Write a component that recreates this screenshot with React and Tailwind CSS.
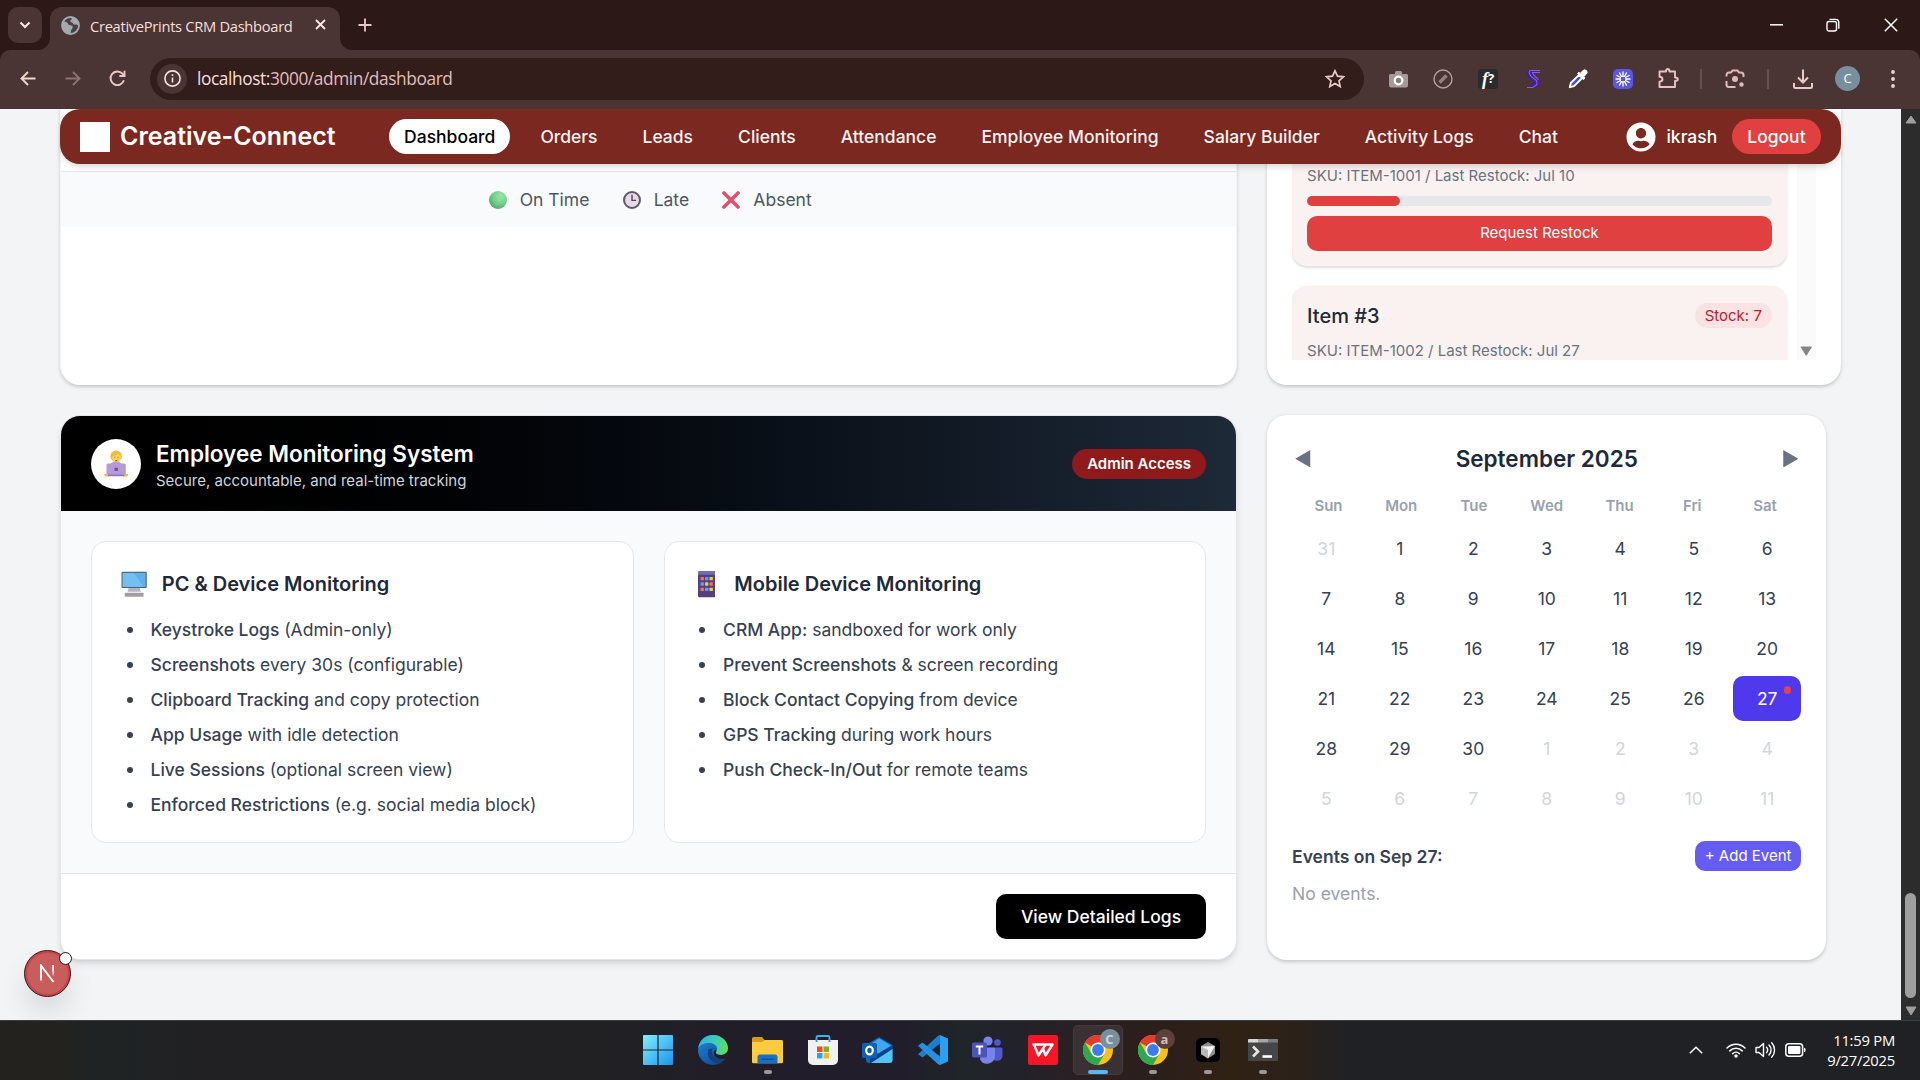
import React from "react";
import { FaUserCircle } from "react-icons/fa";

const INTER = "font-['Inter',sans-serif]";

/* ---------- browser chrome ---------- */

function ToolIcon({ children, className = "" }) {
  return <div className={"flex w-[45px] shrink-0 items-center justify-center " + className}>{children}</div>;
}

function TabStrip() {
  return (
    <div className="flex h-[50px] items-start bg-[#2c1917]">
      <div className="ml-2 mt-[7px] flex h-9 w-[34px] items-center justify-center rounded-[10px] bg-[#4a3534]">
        <svg width="12" height="8" viewBox="0 0 12 8" fill="none" stroke="#fbe9e7" strokeWidth="2"><path d="M1.5 1.5 6 6l4.500-4.500" /></svg>
      </div>
      <div className="relative ml-2 mt-[7px] flex h-[43px] w-[290px] items-start rounded-t-[12px] bg-[#4a3534]">
        <svg className="absolute -left-3 bottom-0" width="12" height="12" viewBox="0 0 12 12"><path d="M12 0v12H0A12 12 0 0 0 12 0Z" fill="#4a3534" /></svg>
        <svg className="absolute -right-3 bottom-0" width="12" height="12" viewBox="0 0 12 12"><path d="M0 0v12h12A12 12 0 0 1 0 0Z" fill="#4a3534" /></svg>
        <svg className="ml-[10.500px] mt-[8.500px] shrink-0" width="19" height="19" viewBox="0 0 19 19">
          <circle cx="9.500" cy="9.500" r="9.200" fill="#4a3f40" />
          <path d="M2 6C4 4.500 6.500 6 6.800 7.500c.3 1.600 2.700 1.500 4.200 2.300 1.600.9.600 2.700-.4 3.700-.9.900-.5 3-1.600 4.500C4 17.500 1 13.500 1 9.500 1 8 1.300 7 2 6Z" fill="#a3abb0" />
          <path d="M10.500 1C15 1.500 18 5 18 9.500c-1.500-.3-2.500-1.200-3.700-.9-1.300.2-2.300-.4-2.300-1.400s-1.800-.6-2.500-1.500c-.7-1 .2-2.200 1.200-2.200Z" fill="#a3abb0" />
          <circle cx="9.500" cy="9.500" r="8.500" fill="none" stroke="#a3abb0" strokeWidth="1.800" />
        </svg>
        <span className="ml-[10.500px] mt-[7.500px] w-[213px] whitespace-nowrap font-['Open_Sans',sans-serif] text-[14.700px] leading-[22px] tracking-[-0.300px] text-[#f7dfdc]">CreativePrints CRM Dashboard</span>
        <svg className="ml-[11.500px] mt-[12px] shrink-0" width="11" height="11" viewBox="0 0 11 11" stroke="#f9e9e7" strokeWidth="1.800"><path d="m1 1 9 9M10 1l-9 9" /></svg>
      </div>
      <svg className="ml-[18px] mt-[18px]" width="14" height="14" viewBox="0 0 14 14" stroke="#e9c9c5" strokeWidth="1.800"><path d="M7 .5v13M.5 7h13" /></svg>
      <div className="flex-1" />
      <svg className="mr-[43px] mt-[24px]" width="13" height="2" viewBox="0 0 13 2"><path d="M0 .8h13" stroke="#fff" strokeWidth="1.500" /></svg>
      <svg className="mr-[44px] mt-[18px]" width="14" height="14" viewBox="0 0 14 14" fill="none" stroke="#fff" strokeWidth="1.400"><rect x="1" y="3.500" width="9.500" height="9.500" rx="2" /><path d="M3.500 1.400h6a3.300 3.300 0 0 1 3.300 3.300v6" /></svg>
      <svg className="mr-[22px] mt-[18px]" width="14" height="14" viewBox="0 0 14 14" stroke="#fff" strokeWidth="1.500"><path d="m.8.8 12.400 12.400M13.200.8.8 13.200" /></svg>
    </div>
  );
}

function Burst() {
  const rays = Array.from({ length: 12 }, (_, i) => i * 30);
  return (
    <svg width="20" height="20" viewBox="0 0 20 20">
      <rect width="20" height="20" rx="5" fill="#5a57e6" />
      {rays.map((r) => (
        <path key={r} d="M10 3v4" stroke="#fff" strokeWidth="1.300" strokeLinecap="round" transform={`rotate(${r} 10 10)`} />
      ))}
      <circle cx="10" cy="10" r="3" fill="none" stroke="#fff" strokeWidth="1" />
    </svg>
  );
}

function Toolbar() {
  return (
    <div className="bg-[#2c1917]">
      <div className="flex h-[59px] items-center rounded-t-[10px] bg-[#4a3534] pb-[2px] pl-[5px]">
        <ToolIcon>
          <svg width="16" height="15" viewBox="0 0 16 15" fill="none" stroke="#f2d3cf" strokeWidth="1.900"><path d="M15.500 7.500H1.500M8 1 1.500 7.500 8 14" /></svg>
        </ToolIcon>
        <ToolIcon>
          <svg width="16" height="15" viewBox="0 0 16 15" fill="none" stroke="#8c7371" strokeWidth="1.900"><path d="M.5 7.500h14M8 1l6.500 6.500L8 14" /></svg>
        </ToolIcon>
        <ToolIcon>
          <svg width="17" height="17" viewBox="0 0 17 17" fill="none" stroke="#ecc9c5" strokeWidth="1.900"><path d="M14.900 10.300A6.800 6.800 0 1 1 13.400 3.700L15.500 6" /><path d="M15.500.8V6h-5.200" /></svg>
        </ToolIcon>
        <div className="ml-[10px] flex h-[42px] w-[1214px] items-center rounded-full bg-[#321d1b]">
          <div className="ml-[7px] flex size-[30px] items-center justify-center rounded-full bg-[#4a3534]">
            <svg width="17" height="17" viewBox="0 0 17 17" fill="none" stroke="#f7dfdc" strokeWidth="1.600"><circle cx="8.500" cy="8.500" r="7.600" /><path d="M8.500 7.500v5M8.500 4.300v1.700" /></svg>
          </div>
          <span className="ml-[10px] flex-1 whitespace-nowrap font-['Open_Sans',sans-serif] text-[17.300px] leading-6 tracking-[-0.400px] text-[#e0bfbb]"><span className="text-[#f7dfdc]">localhost:</span>3000/admin/dashboard</span>
          <svg className="mr-[19px]" width="20" height="19" viewBox="0 0 20 19" fill="none" stroke="#e9c9c5" strokeWidth="1.700" strokeLinejoin="miter"><path d="m10 1.800 2.500 5.400 5.900.6-4.400 4 1.200 5.800L10 14.600l-5.200 3L6 11.800l-4.400-4 5.900-.6z" /></svg>
        </div>
        <div className="ml-[11.500px] flex">
          <ToolIcon>
            <svg width="19" height="18" viewBox="0 0 19 18"><path d="M6 2.500A1.500 1.500 0 0 1 7.500 1h4A1.500 1.500 0 0 1 13 2.500V4h4.500A1.500 1.500 0 0 1 19 5.500v10a2 2 0 0 1-2 2H2a2 2 0 0 1-2-2v-10A1.500 1.500 0 0 1 1.500 4H6Z" fill="#a39a99" /><circle cx="9.500" cy="10.500" r="3.800" fill="#8a7f7e" stroke="#fff" strokeWidth="2.200" /></svg>
          </ToolIcon>
          <ToolIcon>
            <svg width="20" height="20" viewBox="0 0 20 20" fill="none" stroke="#b3a09f"><circle cx="10" cy="10" r="9" strokeWidth="1.400" /><path d="m6.500 13.500 7-7" strokeWidth="3.400" stroke="#94807f" /></svg>
          </ToolIcon>
          <ToolIcon>
            <div className="flex h-5 w-5 items-center justify-center rounded-[3px] bg-[#2a2c2c] text-white">
              <span className="font-['Liberation_Serif',serif] text-[18px] font-bold italic leading-none">f</span>
              <span className="font-['Open_Sans',sans-serif] text-[13px] font-bold leading-none">?</span>
            </div>
          </ToolIcon>
          <ToolIcon>
            <svg width="16" height="20" viewBox="0 0 16 20" fill="none">
              <path d="M15 1H3L1 3.500 3 9l5 3 .500 2L1 19h9.500l4.500-3-1-6-5-4-.5-2H15Z" fill="#3f2390" />
              <path d="M15 1.500H5L4 3.500l2 4 5.500 4 .5 4-4 3H2M15 3.500H7.500L9 6.500l4.500 4" stroke="#8a5cf0" strokeWidth="1.100" />
            </svg>
          </ToolIcon>
          <ToolIcon>
            <svg width="20" height="20" viewBox="0 0 20 20"><path d="M1.800 18.200 2.800 14 11 5.800l3.200 3.200L6 17.200Z" fill="#3c55c8" stroke="#fff" strokeWidth="1.900" strokeLinejoin="round" /><path d="m9.500 4.500 1.500-1.300 1.200 1.200L15 1.600a2.300 2.300 0 0 1 3.400 3.400L15.700 7.700l1.200 1.300-1.300 1.500Z" fill="#fff" stroke="#fff" strokeLinejoin="round" /></svg>
          </ToolIcon>
          <ToolIcon><Burst /></ToolIcon>
          <ToolIcon>
            <svg width="21" height="21" viewBox="0 0 21 21" fill="none" stroke="#e9c4c0" strokeWidth="1.900" strokeLinejoin="round"><path d="M1.500 3.500H8C8 2 8.500 1 9.700 1s1.800 1 1.800 2.500H17v6c1.800 0 2.800.6 2.800 1.800S18.800 13 17 13v6H1.500v-5.200c2.200-.2 3-1.200 3-2.500s-.8-2.400-3-2.600Z" /></svg>
          </ToolIcon>
        </div>
        <div className="ml-[9px] h-5 w-[2px] bg-[#675150]" />
        <ToolIcon className="ml-[10.500px]">
          <svg width="20" height="20" viewBox="0 0 20 20" fill="none" stroke="#e0bcb8" strokeWidth="2"><path d="M1.500 7.500V6a2.500 2.500 0 0 1 2.500-2.500h2l1.500-2h5l1.500 2h2A2.500 2.500 0 0 1 18.500 6v2M1.500 12v3.500A2.500 2.500 0 0 0 4 18h6.500" /><circle cx="10" cy="10" r="3" fill="#e0bcb8" stroke="none" /><circle cx="16.500" cy="15.500" r="2.200" fill="#e0bcb8" stroke="none" /></svg>
        </ToolIcon>
        <div className="ml-[10px] h-5 w-[2px] bg-[#675150]" />
        <ToolIcon className="ml-[11px]">
          <svg width="20" height="20" viewBox="0 0 20 20" fill="none" stroke="#ecc9c5" strokeWidth="2"><path d="M10 .5v13M5 8.500l5 5 5-5M1 14v3.500a1.500 1.500 0 0 0 1.500 1.500h15a1.500 1.500 0 0 0 1.500-1.500V14" /></svg>
        </ToolIcon>
        <ToolIcon>
          <div className="flex size-[25px] items-center justify-center rounded-full bg-[#78909c] font-['Open_Sans',sans-serif] text-[13px] text-white">C</div>
        </ToolIcon>
        <ToolIcon>
          <svg width="4" height="18" viewBox="0 0 4 18" fill="#f2d3cf"><circle cx="2" cy="2" r="1.900" /><circle cx="2" cy="9" r="1.900" /><circle cx="2" cy="16" r="1.900" /></svg>
        </ToolIcon>
      </div>
    </div>
  );
}

/* ---------- dashboard page ---------- */

const NAV = ["Dashboard", "Orders", "Leads", "Clients", "Attendance", "Employee Monitoring", "Salary Builder", "Activity Logs", "Chat"];

function NavBar() {
  return (
    <header className="relative z-10 mx-12 flex h-11 items-center justify-between rounded-2xl bg-[#7a2820] px-4 text-white shadow-md">
      <div className="flex items-center gap-2">
        <div className="size-6 bg-white" />
        <span className="text-xl font-semibold leading-7">Creative-Connect</span>
      </div>
      <nav className="flex gap-3 text-sm font-medium">
        {NAV.map((n, i) => (
          <span key={n} className={i === 0 ? "rounded-full bg-white px-3 py-1 text-black" : "px-3 py-1 text-[#fdf1f0]"}>{n}</span>
        ))}
      </nav>
      <div className="flex items-center gap-3 text-sm font-medium">
        <div className="flex items-center gap-2">
          <FaUserCircle className="size-6" />
          <span>ikrash</span>
        </div>
        <span className="rounded-full bg-[#e0403f] px-3 py-1">Logout</span>
      </div>
    </header>
  );
}

function Legend({ icon, label }) {
  return (
    <div className="flex items-center pl-[2.500px]">
      {icon}
      <span className="ml-[10.500px]">{label}</span>
    </div>
  );
}

function AttendanceCard() {
  return (
    <section className="col-span-2 flex flex-col overflow-hidden rounded-b-2xl border-x border-gray-100 bg-white shadow-[0_1px_3px_rgba(0,0,0,0.18)]">
      <div className="h-[50.700px] border-b border-gray-200" />
      <div className="flex h-11 items-center justify-center gap-6 bg-gray-50 text-sm text-gray-600">
        <Legend
          label="On Time"
          icon={
            <svg width="14.400" height="14.400" viewBox="0 0 14 14">
              <defs><radialGradient id="g" cx=".65" cy=".3" r=".8"><stop offset="0" stopColor="#9be8a6" /><stop offset=".55" stopColor="#6fcf87" /><stop offset="1" stopColor="#4aa06e" /></radialGradient></defs>
              <circle cx="7" cy="7" r="7" fill="url(#g)" />
            </svg>
          }
        />
        <Legend
          label="Late"
          icon={
            <svg width="14.400" height="14.400" viewBox="0 0 14 14">
              <circle cx="7" cy="7" r="6.200" fill="#e4dbe9" stroke="#5f5866" strokeWidth="1.600" />
              <path d="M7 3v4.300h3.200" fill="none" stroke="#4c4254" strokeWidth="1.100" />
              <path d="M7 3v4" stroke="#c05a70" strokeWidth=".7" />
            </svg>
          }
        />
        <Legend
          label="Absent"
          icon={
            <svg width="14.400" height="14.400" viewBox="0 0 14 14"><path d="m1.500 1.500 11 11M12.500 1.500l-11 11" stroke="#e0506f" strokeWidth="2.800" strokeLinecap="round" /></svg>
          }
        />
      </div>
    </section>
  );
}

function StockItem({ name, stock, sku }) {
  return (
    <div className="flex h-[124px] shrink-0 flex-col gap-2 rounded-xl bg-[#faf2f1] p-3 shadow-[0_1px_2px_rgba(0,0,0,0.13)]">
      <div className="flex h-6 items-center justify-between">
        {name && <span className="text-base font-medium text-gray-800">{name}</span>}
        {stock && <span className="rounded-full bg-[#fbe3e3] px-2 py-0.5 text-xs leading-4 text-[#c11a26]">{stock}</span>}
      </div>
      <span className="text-xs leading-4 text-gray-500">{sku}</span>
      <div className="h-2 rounded-full bg-gray-200"><div className="h-2 w-1/5 rounded-full bg-[#e0403f]" /></div>
      <div className="flex h-7 items-center justify-center rounded-lg bg-[#e0403f] text-xs text-white">Request Restock</div>
    </div>
  );
}

function StockCard() {
  return (
    <section className="flex overflow-hidden rounded-b-2xl bg-white px-5 pb-5 shadow-[0_1px_3px_rgba(0,0,0,0.18)]">
      <div className="flex h-[201px] w-full overflow-hidden">
        <div className="mt-[1.500px] flex flex-1 flex-col gap-4 pr-2">
          <StockItem sku="SKU: ITEM-1001 / Last Restock: Jul 10" />
          <StockItem name="Item #3" stock="Stock: 7" sku="SKU: ITEM-1002 / Last Restock: Jul 27" />
        </div>
        <div className="flex w-[15px] items-end justify-center bg-[#fafafa] pb-[3.500px]">
          <svg width="10" height="8" viewBox="0 0 10 8"><path d="M1 .8h8L5 7.200Z" fill="#858585" stroke="#858585" strokeLinejoin="round" /></svg>
        </div>
      </div>
    </section>
  );
}

function FeatureCard({ icon, title, items }) {
  return (
    <div className="flex-1 rounded-xl border border-gray-200 bg-white p-5">
      <div className="mb-3 flex h-7 items-center gap-[8.400px]">
        <div className="flex w-[27.400px] justify-center">{icon}</div>
        <h3 className="text-base font-semibold text-gray-800">{title}</h3>
      </div>
      <ul className="flex flex-col gap-2 text-sm text-gray-700">
        {items.map(([b, t]) => (
          <li key={b} className="flex items-center">
            <span className="ml-[7.900px] mr-[14.300px] mt-[1px] size-[4.600px] rounded-full bg-gray-700" />
            <span><span className="font-medium">{b}</span> {t}</span>
          </li>
        ))}
      </ul>
    </div>
  );
}

const PC_ITEMS = [
  ["Keystroke Logs", "(Admin-only)"],
  ["Screenshots", "every 30s (configurable)"],
  ["Clipboard Tracking", "and copy protection"],
  ["App Usage", "with idle detection"],
  ["Live Sessions", "(optional screen view)"],
  ["Enforced Restrictions", "(e.g. social media block)"],
];
const MOBILE_ITEMS = [
  ["CRM App:", "sandboxed for work only"],
  ["Prevent Screenshots", "& screen recording"],
  ["Block Contact Copying", "from device"],
  ["GPS Tracking", "during work hours"],
  ["Push Check-In/Out", "for remote teams"],
];

const APP_DOTS = ["#f0705a", "#5aa0f0", "#f5c84a", "#5aa0f0", "#f5c84a", "#f0705a", "#f0705a", "#5aa0f0", "#f5c84a"];

function MonitoringCard() {
  return (
    <section className="col-span-2 flex flex-col overflow-hidden rounded-2xl border border-gray-200 bg-white shadow-md">
      <div className="flex h-[77px] items-center bg-linear-to-r from-black to-gray-800 px-6">
        <div className="flex size-10 items-center justify-center rounded-full bg-white">
          <svg width="21" height="23" viewBox="0 0 21 23">
            <circle cx="10.500" cy="5.800" r="4.600" fill="#f2bb3a" />
            <path d="M7.500 5.500c2 0 4-.8 4.500-2 .5 1 1.200 1.600 2 2v2a3.200 3.200 0 0 1-6.500 0Z" fill="#ffd25e" />
            <path d="M9.300 6.600v.6M12 6.600v.6M9.800 9c.6.4 1.200.4 1.700 0" stroke="#7b5220" strokeWidth=".7" />
            <path d="M6 12.500c.5-2 2.500-2.500 4.500-2.500s4 .5 4.500 2.500Z" fill="#b79ad8" />
            <rect x="2.800" y="11.500" width="15.400" height="9.500" rx="1.200" fill="#b49ad6" />
            <rect x="9.200" y="15" width="2.700" height="2.500" fill="#66529a" />
            <path d="M1 20h3l1 2H1.500ZM20 20h-3l-1 2h3.500Z" fill="#f0b93d" />
            <rect x="4" y="20.300" width="13" height="1.500" rx=".5" fill="#8f79bd" />
          </svg>
        </div>
        <div className="ml-3 flex-1">
          <h2 className="text-lg font-semibold leading-7 text-white">Employee Monitoring System</h2>
          <p className="text-xs leading-4 text-gray-300">Secure, accountable, and real-time tracking</p>
        </div>
        <span className="rounded-full bg-[#901a1b] px-3 py-1 text-xs font-semibold leading-4 text-white">Admin Access</span>
      </div>
      <div className="flex gap-6 bg-gray-50 p-6">
        <FeatureCard
          title="PC & Device Monitoring"
          items={PC_ITEMS}
          icon={
            <svg width="21" height="21" viewBox="0 0 21 21">
              <rect x=".4" y=".6" width="20.200" height="13" rx=".8" fill="#46617f" />
              <rect x="1.300" y="1.500" width="18.400" height="11.200" fill="#5fb1ea" />
              <path d="M1.300 1.500h9L18 12.700H1.300Z" fill="#7fc4f2" opacity=".7" />
              <path d="M6 13.600h9l.8 3H5.200Z" fill="#b9b3bd" />
              <rect x="3" y="17.300" width="15" height="3.300" rx=".5" fill="#a69ca8" />
            </svg>
          }
        />
        <FeatureCard
          title="Mobile Device Monitoring"
          items={MOBILE_ITEMS}
          icon={
            <svg width="14" height="21" viewBox="0 0 14 21">
              <rect width="14" height="21" rx="1.300" fill="#54407c" />
              <path d="M0 3V1.300A1.300 1.300 0 0 1 1.300 0h11.400A1.300 1.300 0 0 1 14 1.300V3Z" fill="#6e6fb5" />
              {APP_DOTS.map((c, i) => (
                <rect key={i} x={2 + (i % 3) * 3.6} y={4.700 + Math.floor(i / 3) * 4.300} width="2.700" height="2.700" rx=".5" fill={c} />
              ))}
            </svg>
          }
        />
      </div>
      <div className="flex justify-end border-t border-gray-200 px-6 py-4">
        <span className="flex h-9 items-center rounded-lg bg-black px-5 text-sm font-medium text-white">View Detailed Logs</span>
      </div>
    </section>
  );
}

const WEEK = ["Sun", "Mon", "Tue", "Wed", "Thu", "Fri", "Sat"];
const DAYS = Array.from({ length: 42 }, (_, i) => {
  if (i === 0) return { n: 31, out: true };
  if (i <= 30) return { n: i, out: false };
  return { n: i - 30, out: true };
});

function dayClass(d) {
  if (d.out) return "relative flex h-9 items-center justify-center text-gray-300";
  if (d.n === 27) return "relative flex h-9 items-center justify-center rounded-lg bg-[#4f39ec] text-white";
  return "relative flex h-9 items-center justify-center text-gray-700";
}

function CalendarCard() {
  return (
    <section className="w-[447.500px] rounded-2xl bg-white p-5 pt-[20.600px] shadow-[0_1px_3px_rgba(0,0,0,0.18)]">
      <div className="flex h-7 items-center justify-between pl-[2.500px] pr-[2.500px]">
        <svg width="12.400" height="14" viewBox="0 0 12 14"><path d="M12 0v14L0 7Z" fill="#6a7282" /></svg>
        <h3 className="text-lg font-semibold text-gray-800">September 2025</h3>
        <svg width="12.400" height="14" viewBox="0 0 12 14"><path d="M0 0v14l12-7Z" fill="#6a7282" /></svg>
      </div>
      <div className="mt-4 grid grid-cols-7 text-center text-xs font-semibold leading-4 text-gray-400">
        {WEEK.map((w) => <span key={w}>{w}</span>)}
      </div>
      <div className="mt-2 grid grid-cols-7 gap-1 text-sm">
        {DAYS.map((d, i) => (
          <div key={i} className={dayClass(d)}>
            {d.n}
            {!d.out && d.n === 27 && <span className="absolute right-2 top-2 size-1.5 rounded-full bg-[#e6404a]" />}
          </div>
        ))}
      </div>
      <div className="mt-4 flex h-6 items-center justify-between">
        <span className="text-sm font-semibold text-gray-700">Events on Sep 27:</span>
        <span className="rounded-lg bg-[#655cf6] px-2 py-1 text-xs leading-4 text-white">+ Add Event</span>
      </div>
      <p className="mt-2 text-sm text-gray-400">No events.</p>
    </section>
  );
}

function DevBadge() {
  return (
    <div className="absolute left-6 top-[840.500px] flex size-[47px] items-center justify-center rounded-full border-[1.500px] border-[#3a1618] bg-[#c95d5b] shadow-[inset_0_0_0_2px_#c8424c,0_16px_32px_-8px_rgba(0,0,0,0.24)]">
      <svg width="17" height="19" viewBox="0 0 17 19" fill="none">
        <defs><linearGradient id="n" x1="0" y1="0" x2="0" y2="1"><stop offset=".4" stopColor="#fff" /><stop offset="1" stopColor="#fff" stopOpacity="0" /></linearGradient></defs>
        <path d="M2 16.500V1.500L14.500 18" stroke="#fff" strokeWidth="1.900" />
        <rect x="13.200" y="1" width="1.800" height="12" fill="url(#n)" />
      </svg>
      <span className="absolute right-[-1.500px] top-[1px] size-[13px] rounded-full border-[1.500px] border-[#1c1c1c] bg-white" />
    </div>
  );
}

function Page() {
  return (
    <div className="relative flex h-[911px] overflow-hidden bg-[#f3f4f6]">
      <div className="h-[911px] w-[1901px] overflow-hidden">
        <div className={"w-[1520.500px] [zoom:1.25] " + INTER}>
          <NavBar />
          <main className="-mt-11 flex flex-col gap-6 px-12">
            <div className="grid h-[221px] grid-cols-3 gap-6">
              <AttendanceCard />
              <StockCard />
            </div>
            <div className="grid h-[435.700px] grid-cols-3 gap-6">
              <MonitoringCard />
              <CalendarCard />
            </div>
          </main>
        </div>
      </div>
      <div className="flex flex-1 flex-col items-center bg-[#2c2c2c]">
        <svg className="mt-[6px] shrink-0" width="12" height="9" viewBox="0 0 12 9"><path d="M6 1 11 8H1Z" fill="#9f9f9f" stroke="#9f9f9f" strokeLinejoin="round" /></svg>
        <div className="mt-[769px] h-[105px] w-[11px] shrink-0 rounded-full bg-[#9f9f9f]" />
        <svg className="mt-[8px] shrink-0" width="12" height="10" viewBox="0 0 12 10"><path d="M6 9 11 1H1Z" fill="#9f9f9f" stroke="#9f9f9f" strokeLinejoin="round" /></svg>
      </div>
      <DevBadge />
    </div>
  );
}

/* ---------- taskbar ---------- */

function ChromeLogo({ letter, bg, fg }) {
  return (
    <div className="relative size-[30px]">
      <svg width="30" height="30" viewBox="0 0 30 30">
        <circle cx="15" cy="15" r="15" fill="#fbc116" />
        <path d="M15 15 2 7.500A15 15 0 0 1 28 7.500H15Z" fill="#e33b2e" />
        <path d="M2 7.500A15 15 0 0 0 15 30l6.500-11.250L8.500 18.750Z" fill="#2da94f" />
        <circle cx="15" cy="15" r="7.500" fill="#fff" />
        <circle cx="15" cy="15" r="5.900" fill="#3b7ded" />
      </svg>
      <span className="absolute -right-[7px] -top-[6px] flex size-5 items-center justify-center rounded-full font-['Open_Sans',sans-serif] text-[13px] font-bold leading-none" style={{ background: bg, color: fg }}>{letter}</span>
    </div>
  );
}

function TaskSlot({ children, mark, active }) {
  return (
    <div className="flex w-[55px] justify-center">
      <div className={active ? "relative flex h-[50px] w-[50px] items-center justify-center rounded-[5px] border border-[#473a3d] bg-[#3b3033]" : "relative flex h-[50px] w-[50px] items-center justify-center"}>
        {children}
        {mark && <span className={active ? "absolute bottom-0 h-[4px] w-5 rounded-full bg-[#55b8ee]" : "absolute bottom-[1px] h-[4px] w-[8px] rounded-full bg-[#9a9896]"} />}
      </div>
    </div>
  );
}

function Taskbar() {
  return (
    <footer className="flex h-[60px] border-t border-[#3b3d3e] bg-[linear-gradient(90deg,#24221e_0px,#24221e_50px,#1e2324_100px,#212124_190px,#212124_600px,#211d2a_760px,#211d2a_900px,#1f2529_960px,#22222a_1010px,#2c1f21_1100px,#2b1f1b_1160px,#302114_1230px,#2c2119_1290px,#202125_1350px,#202125_1920px)]">
      <div className="ml-[630px] flex items-center pb-px">
        <TaskSlot>
          <svg width="30" height="30" viewBox="0 0 30 30">
            <defs><linearGradient id="w" x1="0" y1="0" x2="1" y2="1"><stop offset="0" stopColor="#7df0fb" /><stop offset="1" stopColor="#1b93ef" /></linearGradient></defs>
            <path d="M1 0h13.400v14.400H0V1a1 1 0 0 1 1-1ZM15.600 0H29a1 1 0 0 1 1 1v13.400H15.600ZM0 15.600h14.400V30H1a1 1 0 0 1-1-1ZM15.600 15.600H30V29a1 1 0 0 1-1 1H15.600Z" fill="url(#w)" />
          </svg>
        </TaskSlot>
        <TaskSlot>
          <svg width="30" height="30" viewBox="0 0 30 30">
            <defs>
              <linearGradient id="e1" x1="0" y1=".3" x2="1" y2=".5"><stop offset="0" stopColor="#2fb3e8" /><stop offset=".6" stopColor="#3fcfae" /><stop offset="1" stopColor="#62dd58" /></linearGradient>
              <linearGradient id="e2" x1="0" y1="0" x2=".6" y2="1"><stop offset="0" stopColor="#1d8be0" /><stop offset="1" stopColor="#0d4f9e" /></linearGradient>
            </defs>
            <circle cx="15" cy="15" r="15" fill="url(#e2)" />
            <path d="M.2 13C1.300 5.300 7.500 0 15 0c8.800 0 15 6.500 15 13 0 4.500-3.500 7-7.200 7-3.300 0-5-1.200-5-2.300 0-.9 1.300-1.500 1.300-4 0-3.200-3.600-5.700-8-5.700C6 8 1.800 10 .2 13Z" fill="url(#e1)" />
            <path d="M10.800 14c-3 6 1 13.500 9 14.600 3.500-.9 6.600-3.400 8-6.200-3 1.800-8.800 2.200-12-1.200-2-2.100-2.300-5.200-1-7.700Z" fill="#1a3f78" />
            <path d="M17.800 17.700c.3 1.300 2 2.300 5 2.300 3 0 5.500-1.200 7.200-4v6l-2 1c-.5.600-2 1-4.600 1-3 .3-6.500-1.500-7.400-4.200-.8-2-.3-3.800 1.100-5.300 1.200.8 1.500 2.100.7 3.200Z" fill="#212124" />
          </svg>
        </TaskSlot>
        <TaskSlot mark>
          <svg width="31" height="28" viewBox="0 0 31 28">
            <path d="M1.500 1H10l3 3.500V9H0V2.500A1.500 1.500 0 0 1 1.500 1Z" fill="#d99a17" />
            <path d="M0 6h10l3-2h16.500A1.500 1.500 0 0 1 31 5.500v20.300A1.500 1.500 0 0 1 29.500 27.300h-28A1.500 1.500 0 0 1 0 25.800Z" fill="#fccb3e" />
            <path d="M5.500 27.500V21a2.500 2.500 0 0 1 2.500-2.500h15A2.500 2.500 0 0 1 25.500 21v6.500Z" fill="#1a6fc4" />
            <path d="M9.500 23.200h12" stroke="#0d4b93" strokeWidth="1.200" />
          </svg>
        </TaskSlot>
        <TaskSlot>
          <svg width="30" height="30" viewBox="0 0 30 30">
            <path d="M8.500 7V2.500A1.500 1.500 0 0 1 10 1h10a1.500 1.500 0 0 1 1.500 1.500V7" fill="none" stroke="#3fb4ea" strokeWidth="1.800" />
            <path d="M0 5h30v20a5 5 0 0 1-5 5H5a5 5 0 0 1-5-5Z" fill="#f1f1f1" />
            <path d="M8.500 7V4M21.500 7V4" stroke="#2a9ad8" strokeWidth="1.800" />
            <path d="M9 11.500h5.500V17H9Z" fill="#ef4a23" /><path d="M15.500 11.500H21V17h-5.500Z" fill="#7cb518" /><path d="M9 18h5.500v5.500H9Z" fill="#27a4ea" /><path d="M15.500 18H21v5.500h-5.500Z" fill="#fbb814" />
          </svg>
        </TaskSlot>
        <TaskSlot>
          <svg width="31" height="28" viewBox="0 0 31 28">
            <path d="M4 9 17 1l13.500 8v15a3 3 0 0 1-3 3H7a3 3 0 0 1-3-3Z" fill="#1267b8" />
            <path d="m8 8.500 9-6 12 7-13 8Z" fill="#3fa9ec" />
            <path d="M30.500 9.500v6L12 27H8v-4Z" fill="#0c3f8c" />
            <path d="M30.500 13v11a3 3 0 0 1-3 3H9Z" fill="#52c4f2" />
            <rect y="7" width="15" height="15" rx="1.500" fill="#0f5fb5" />
            <ellipse cx="7.500" cy="14.500" rx="3.300" ry="3.900" fill="none" stroke="#fff" strokeWidth="2.200" />
          </svg>
        </TaskSlot>
        <TaskSlot>
          <svg width="30" height="30" viewBox="0 0 30 30">
            <path d="M22 0v8.500L4.500 22.500 0 19.200 20 .8Z" fill="#1b7fd0" />
            <path d="M22 30v-8.500L4.500 7.500 0 10.800 20 29.200Z" fill="#2591e2" />
            <path d="M22 0 30 3.500v23L22 30Z" fill="#2b9ff0" />
          </svg>
        </TaskSlot>
        <TaskSlot>
          <svg width="31" height="28" viewBox="0 0 31 28">
            <circle cx="25.500" cy="6.500" r="3.300" fill="#5059c9" /><circle cx="16" cy="5" r="4.600" fill="#7b83eb" />
            <path d="M21 11.500h8a1.500 1.500 0 0 1 1.500 1.500v6.500a5.500 5.500 0 0 1-9.500 3.700Z" fill="#5059c9" />
            <path d="M10 11.500h11.500A1.500 1.500 0 0 1 23 13v7a8 8 0 0 1-15 3.500Z" fill="#7b83eb" />
            <rect x="0" y="6.500" width="15" height="15" rx="1.500" fill="#4b53bc" />
            <path d="M3.800 10.500h7.400M7.500 10.500v8" stroke="#fff" strokeWidth="2" />
          </svg>
        </TaskSlot>
        <TaskSlot>
          <svg width="30" height="30" viewBox="0 0 30 30">
            <rect width="30" height="30" rx="2.500" fill="#fb1425" />
            <path d="M4.500 9.500h6.500M6 9.500l4.500 11 4.500-7 2.500 7 7-11h-7l-3.200 5.500M11 9.500h5.500" fill="none" stroke="#fff" strokeWidth="2.400" strokeLinejoin="round" />
          </svg>
        </TaskSlot>
        <TaskSlot mark active><ChromeLogo letter="C" bg="#78909c" fg="#cfdbe1" /></TaskSlot>
        <TaskSlot mark><ChromeLogo letter="a" bg="#5d4038" fg="#cdbfba" /></TaskSlot>
        <TaskSlot mark>
          <svg width="24" height="24" viewBox="0 0 24 24">
            <rect width="24" height="24" rx="5" fill="#000" />
            <path d="m12 4 7 4v8l-7 4.500L5 16V8Z" fill="#8d8d8d" />
            <path d="m5 8 7 4v8.500L5 16Z" fill="#b7b7b7" />
            <path d="M5 8.500 19 8 12 20v-8Z" fill="#f3f3f3" />
          </svg>
        </TaskSlot>
        <TaskSlot mark>
          <svg width="30" height="22" viewBox="0 0 30 22">
            <rect width="30" height="22" rx="1" fill="#464646" />
            <path d="M0 1a1 1 0 0 1 1-1h9v3.500H0Z" fill="#d6d6d6" /><path d="M10 0h10v3.500H10Z" fill="#a5a5a5" /><path d="M20 0h9a1 1 0 0 1 1 1v2.500H20Z" fill="#7b7b7b" />
            <path d="m5 7.500 5 5-5 5" fill="none" stroke="#e6e6e6" strokeWidth="2.600" /><path d="M14.500 17.500h9.500" stroke="#fff" strokeWidth="2.600" />
          </svg>
        </TaskSlot>
      </div>
      <div className="flex flex-1 items-center justify-end pb-[2px] pr-[25px]">
        <svg className="mr-[23px]" width="14" height="8" viewBox="0 0 14 8" fill="none" stroke="#fff" strokeWidth="1.500"><path d="m.8 7.200 6.200-6 6.200 6" /></svg>
        <svg className="mr-[9px]" width="20" height="16" viewBox="0 0 20 16" fill="none" stroke="#fff" strokeWidth="1.500" strokeLinecap="round"><path d="M1 6a12.700 12.700 0 0 1 18 0M3.800 8.900a8.800 8.800 0 0 1 12.400 0M6.600 11.700a4.900 4.900 0 0 1 6.800 0" /><circle cx="10" cy="14" r="1" fill="#fff" /></svg>
        <svg className="mr-[9px]" width="21" height="18" viewBox="0 0 21 18" fill="none" stroke="#fff" strokeWidth="1.400" strokeLinecap="round" strokeLinejoin="round"><path d="M1 6.500h3L8.500 2.500v13L4 11.500H1ZM11.500 6.300a4 4 0 0 1 0 5.400M14 4a7 7 0 0 1 0 10M16.700 1.800a10.500 10.500 0 0 1 0 14.400" /></svg>
        <svg className="mr-[14px]" width="21" height="14" viewBox="0 0 21 14"><rect x=".8" y=".8" width="16.800" height="12.400" rx="3" fill="none" stroke="#fff" strokeWidth="1.500" /><rect x="3" y="3" width="12.400" height="8" rx="1.200" fill="#fff" /><path d="M19 4.800c1.200.2 1.600.8 1.600 2.200s-.4 2-1.600 2.200Z" fill="#fff" /></svg>
        <div className="w-[75px] whitespace-nowrap text-right font-['Open_Sans',sans-serif] text-[14.800px] leading-5 tracking-[-0.250px] text-white">
          <div>11:59 PM</div>
          <div>9/27/2025</div>
        </div>
      </div>
    </footer>
  );
}

export default function App() {
  return (
    <div className="flex h-[1080px] w-[1920px] flex-col overflow-hidden bg-[#202125]">
      <TabStrip />
      <Toolbar />
      <Page />
      <Taskbar />
    </div>
  );
}
